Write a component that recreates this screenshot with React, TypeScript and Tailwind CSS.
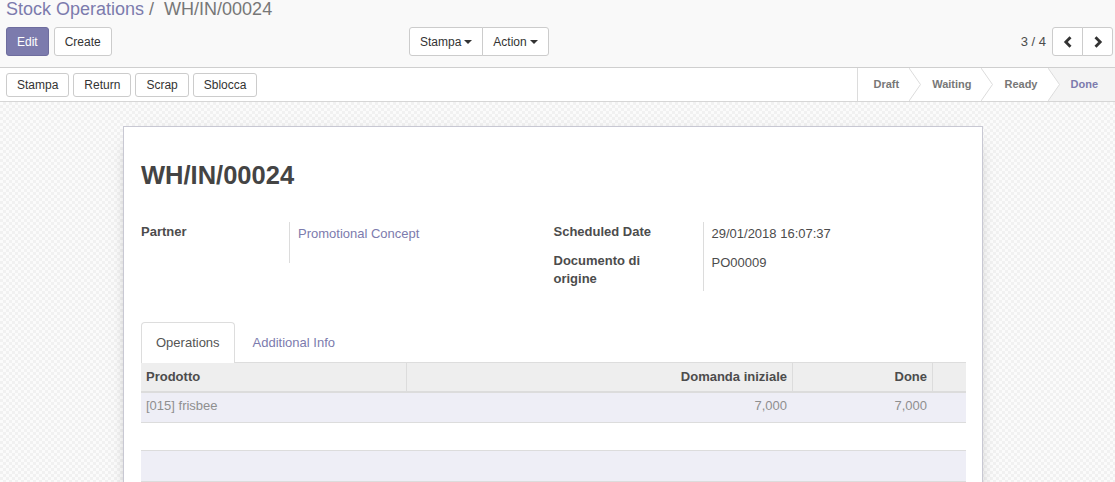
/**
 * App.tsx — Odoo-style stock picking form (WH/IN/00024), read-only mode.
 * Control panel, statusbar, then the sheet with groups, tabs and the move lines.
 */

function Caret() {
  return (
    <span className="ml-[3px] inline-block h-0 w-0 border-x-4 border-t-4 border-b-0 border-x-transparent border-t-[#333] align-middle" />
  );
}

function Chevron({ dir }: { dir: "left" | "right" }) {
  return (
    <svg width="10" height="12" viewBox="0 0 10 12" fill="none">
      <path
        d={dir === "left" ? "M7.5 1.2 L2.8 6 L7.5 10.8" : "M2.5 1.2 L7.2 6 L2.5 10.8"}
        stroke="#333"
        strokeWidth="2.8"
        strokeLinejoin="miter"
      />
    </svg>
  );
}

function StatusArrow({ nextBg }: { nextBg?: string }) {
  return (
    <svg width="12" height="33" viewBox="0 0 12 33" className="shrink-0">
      {nextBg && <path d="M0 0 L11.5 16.5 L0 33 L12 33 L12 0 Z" fill={nextBg} />}
      <path d="M0 0 L11.5 16.5 L0 33" fill="none" stroke="#dcdcdc" strokeWidth="1" />
    </svg>
  );
}

function ControlPanel() {
  return (
    <div className="h-[68px] border-b border-[#cfcfcf] bg-[#f9f9f9] pl-[6px] pr-[2px]">
      <div className="h-[18px] whitespace-nowrap text-[18px] leading-[18px]">
        <span className="text-[#7c7bad]">Stock Operations</span>
        <span className="px-[5px] text-[#777]">/&nbsp;</span>
        <span className="text-[#777]">WH/IN/00024</span>
      </div>
      <div className="mt-[9px] flex h-[29px] items-center">
        <div className="flex w-[403px] gap-[5px]">
          <button className="h-[29px] rounded-[3px] border border-[#6e6d9e] bg-[#7c7bad] px-[10px] text-[12px] text-white">
            Edit
          </button>
          <button className="h-[29px] rounded-[3px] border border-[#ccc] bg-white px-[10px] text-[12px] text-[#333]">
            Create
          </button>
        </div>
        <div className="flex">
          <button className="flex h-[29px] items-center rounded-l-[3px] border border-[#ccc] bg-white px-[10px] text-[12px] text-[#333]">
            Stampa
            <Caret />
          </button>
          <button className="-ml-px flex h-[29px] items-center rounded-r-[3px] border border-[#ccc] bg-white px-[10px] text-[12px] text-[#333]">
            Action
            <Caret />
          </button>
        </div>
        <div className="ml-auto flex items-center">
          <span className="mr-[6px] text-[13px] text-[#4c4c4c]">3 / 4</span>
          <div className="flex">
            <button className="flex h-[29px] w-[31px] items-center justify-center rounded-l-[3px] border border-[#ccc] bg-white">
              <Chevron dir="left" />
            </button>
            <button className="-ml-px flex h-[29px] w-[31px] items-center justify-center rounded-r-[3px] border border-[#ccc] bg-white">
              <Chevron dir="right" />
            </button>
          </div>
        </div>
      </div>
    </div>
  );
}

function StatusBar() {
  const actions = ["Stampa", "Return", "Scrap", "Sblocca"];
  return (
    <div className="flex h-[34px] border-b border-[#d6d6d6] bg-white">
      <div className="flex items-center gap-[4px] pl-[6px]">
        {actions.map((a) => (
          <button
            key={a}
            className="h-[24px] rounded-[3px] border border-[#ccc] bg-white px-[10px] text-[12px] leading-[22px] text-[#333]"
          >
            {a}
          </button>
        ))}
      </div>
      <div className="ml-auto flex h-[33px] items-center border-l border-[#dcdcdc] text-[11px] font-bold">
        <span className="pl-[15px] pr-[10px] text-[#777]">Draft</span>
        <StatusArrow />
        <span className="pl-[11px] pr-[10px] text-[#777]">Waiting</span>
        <StatusArrow />
        <span className="pl-[11px] pr-[10px] text-[#777]">Ready</span>
        <StatusArrow nextBg="#f4f4f4" />
        <span className="flex h-full items-center bg-[#f4f4f4] pl-[11px] pr-[17px] text-[#7c7bad]">Done</span>
      </div>
    </div>
  );
}

function Sheet() {
  return (
    <div className="ml-[123px] min-h-[420px] w-[860px] border border-[#c8c8d3] bg-white pl-[17px] pr-[16px] pt-[34px] shadow-[0_5px_20px_-15px_#000]">
      <h1 className="h-[29px] text-[25.5px] font-bold leading-[29px] text-[#444]">WH/IN/00024</h1>

      <div className="mt-[32px] grid grid-cols-2 text-[13px] text-[#4c4c4c]">
        <div className="grid grid-cols-[148px_1fr] content-start">
          <div className="h-[41px] pt-[1px] font-bold leading-[18px]">Partner</div>
          <div className="h-[41px] border-l border-[#dcdcdc] pl-[8px] pt-[3px] leading-[18px] text-[#7c7bad]">
            Promotional Concept
          </div>
        </div>
        <div className="grid grid-cols-[149px_1fr] content-start">
          <div className="h-[29px] pt-[1px] font-bold leading-[18px]">Scheduled Date</div>
          <div className="h-[29px] border-l border-[#dcdcdc] pl-[8px] pt-[3px] leading-[18px]">29/01/2018 16:07:37</div>
          <div className="h-[40px] pt-[1px] font-bold leading-[18px]">
            Documento di
            <br />
            origine
          </div>
          <div className="h-[40px] border-l border-[#dcdcdc] pl-[8px] pt-[3px] leading-[18px]">PO00009</div>
        </div>
      </div>

      <div className="mt-[31px] flex border-b border-[#ddd] text-[13px]">
        <div className="-mb-px rounded-t-[4px] border border-b-0 border-[#ddd] bg-white px-[14px] pb-[8px] pt-[10px] leading-[20px] text-[#555]">
          Operations
        </div>
        <div className="ml-[2px] border border-transparent px-[15px] pb-[8px] pt-[10px] leading-[20px] text-[#7c7bad]">
          Additional Info
        </div>
      </div>

      <div className="text-[13px]">
        <div className="grid h-[30px] grid-cols-[265px_386px_140px_34px] border-b-2 border-[#dcdcdc] bg-[#eee] font-bold leading-[28px] text-[#4c4c4c]">
          <div className="px-[5px]">Prodotto</div>
          <div className="border-l border-[#dcdcdc] px-[5px] text-right">Domanda iniziale</div>
          <div className="border-l border-[#dcdcdc] px-[5px] text-right">Done</div>
          <div className="border-l border-[#dcdcdc]" />
        </div>
        <div className="grid h-[30px] grid-cols-[265px_386px_140px_34px] border-b border-[#dcdcdc] bg-[#eeeef6] pt-[4px] leading-[18px] text-[#8f8f8f]">
          <div className="px-[5px]">[015] frisbee</div>
          <div className="px-[5px] text-right">7,000</div>
          <div className="px-[5px] text-right">7,000</div>
          <div />
        </div>
        <div className="h-[28px] border-b border-[#dcdcdc] bg-white" />
        <div className="h-[31px] border-b border-[#dcdcdc] bg-[#eeeef6]" />
      </div>
    </div>
  );
}

export default function App() {
  return (
    <div className="h-[482px] overflow-hidden bg-white font-[Liberation_Sans,Arial,sans-serif] text-[#4c4c4c]">
      <ControlPanel />
      <StatusBar />
      <div className="h-[400px] bg-[repeating-conic-gradient(#f1f1f1_0_25%,#fbfbfb_0_50%)] bg-[length:6px_6px] pt-[24px]">
        <Sheet />
      </div>
    </div>
  );
}
